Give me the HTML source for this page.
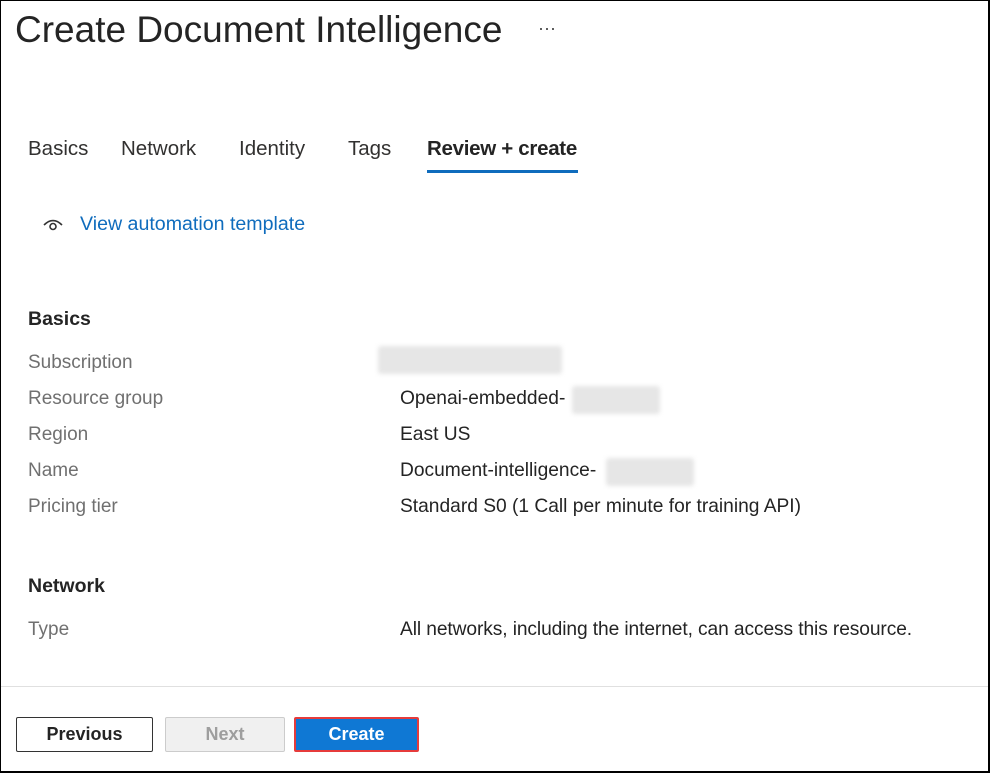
<!DOCTYPE html>
<html><head><style>
body{margin:0;width:990px;height:773px;overflow:hidden;background:#fff;font-family:"Liberation Sans",sans-serif;position:relative}
.frame{position:absolute;left:0;top:0;border:1px solid #000;border-right-width:2px;border-bottom-width:2px;box-sizing:border-box;width:990px;height:773px}
.a{position:absolute;white-space:nowrap}
.lbl{color:#707070;font-size:19px}
.val{color:#242424;font-size:19.2px}
.blur{position:absolute;background:#e6e6e6;height:28px;border-radius:3px;filter:blur(2px)}
.btn{position:absolute;top:717px;height:35px;box-sizing:border-box;font-size:18px;font-weight:bold;text-align:center;line-height:33px;border-radius:2px}
.tab{position:absolute;top:137px;font-size:20.5px;color:#323130}
</style></head><body>
<div class="frame"></div>
<div class="a" style="left:15px;top:9px;font-size:37px;color:#242424">Create Document Intelligence</div>
<div class="a" style="left:538px;top:18px;font-size:18px;color:#444">···</div>
<div class="tab" style="left:28px">Basics</div>
<div class="tab" style="left:121px">Network</div>
<div class="tab" style="left:239px">Identity</div>
<div class="tab" style="left:348px">Tags</div>
<div class="a" style="left:427px;top:137px;font-size:20.5px;color:#242424;font-weight:bold;letter-spacing:-0.3px">Review + create</div>
<div class="a" style="left:427px;top:170px;width:151px;height:3px;background:#0f6cbd"></div>
<svg class="a" style="left:42px;top:216px" width="22" height="16" viewBox="0 0 22 16"><path d="M2 9 Q11 0 20 9" fill="none" stroke="#333" stroke-width="1.6"/><circle cx="11" cy="10.5" r="3" fill="none" stroke="#333" stroke-width="1.6"/></svg>
<div class="a" style="left:80px;top:213px;font-size:19.6px;color:#0f6cbd">View automation template</div>
<div class="a" style="left:28px;top:308px;font-size:19.5px;font-weight:bold;color:#242424">Basics</div>
<div class="a lbl" style="left:28px;top:352px">Subscription</div>
<div class="blur" style="left:378px;top:346px;width:184px"></div>
<div class="a lbl" style="left:28px;top:388px">Resource group</div>
<div class="a val" style="left:400px;top:388px">Openai-embedded-</div>
<div class="blur" style="left:572px;top:386px;width:88px"></div>
<div class="a lbl" style="left:28px;top:424px">Region</div>
<div class="a val" style="left:400px;top:424px">East US</div>
<div class="a lbl" style="left:28px;top:460px">Name</div>
<div class="a val" style="left:400px;top:460px">Document-intelligence-</div>
<div class="blur" style="left:606px;top:458px;width:88px"></div>
<div class="a lbl" style="left:28px;top:496px">Pricing tier</div>
<div class="a val" style="left:400px;top:496px">Standard S0 (1 Call per minute for training API)</div>
<div class="a" style="left:28px;top:575px;font-size:19.5px;font-weight:bold;color:#242424">Network</div>
<div class="a lbl" style="left:28px;top:619px">Type</div>
<div class="a val" style="left:400px;top:619px;letter-spacing:-0.1px">All networks, including the internet, can access this resource.</div>
<div class="a" style="left:1px;top:686px;width:987px;height:1px;background:#e0e0e0"></div>
<div class="btn" style="left:16px;width:137px;border:1px solid #333;color:#242424;background:#fff">Previous</div>
<div class="btn" style="left:165px;width:120px;border:1px solid #ccc;color:#9e9e9e;background:#f0f0f0">Next</div>
<div class="btn" style="left:294px;width:125px;border:2px solid #e63b3b;background:#0f78d4;color:#fff;line-height:31px">Create</div>
</body></html>
